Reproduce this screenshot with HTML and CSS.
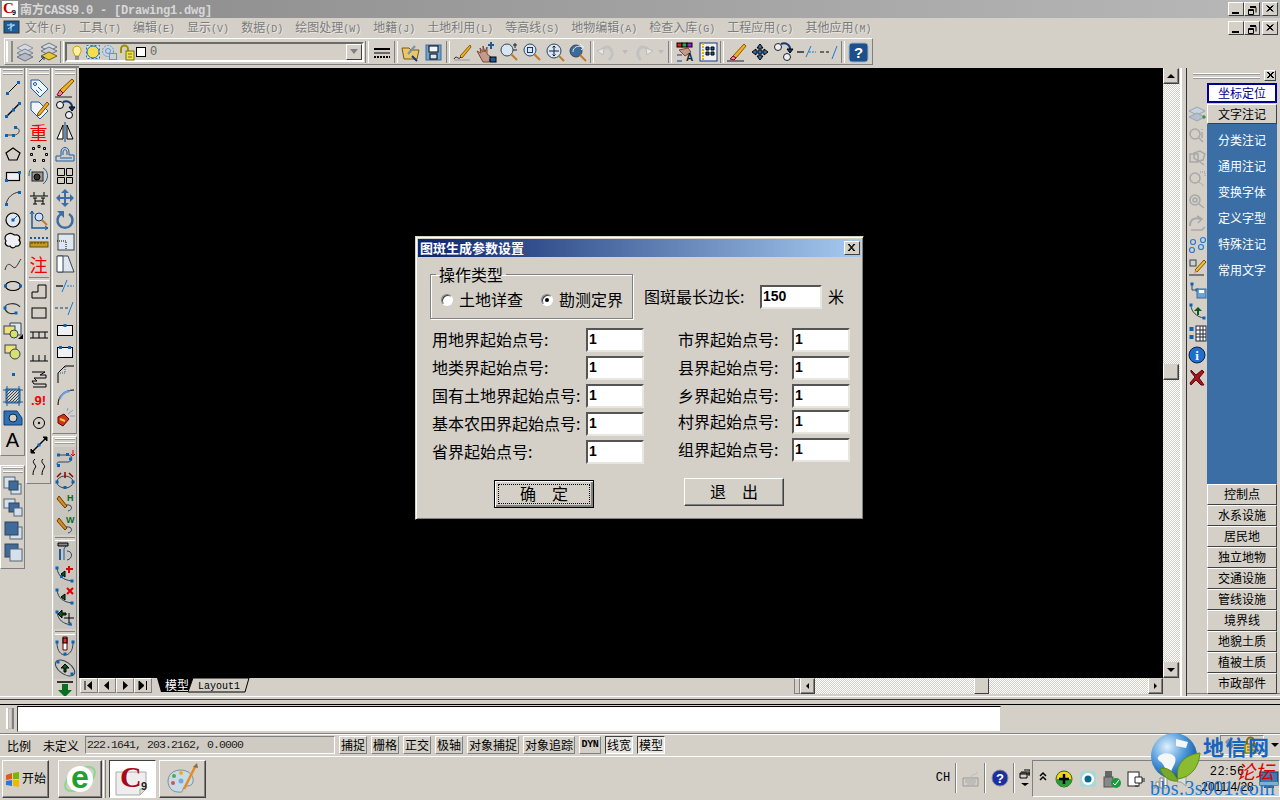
FILE: index.html
```html
<!DOCTYPE html>
<html lang="zh-CN">
<head>
<meta charset="utf-8">
<title>南方CASS9.0</title>
<link rel="stylesheet" href="styles.css">
</head>
<body>
<div class="app">

<header class="titlebar">
  <svg class="appicon"><rect width="16" height="16" fill="#fff"/><text x="1" y="12" class="cred">C</text><text x="10" y="14" class="c9">9</text></svg>
  <div class="title">南方<span class="mono">CASS9.0 - [Drawing1.dwg]</span></div>
  <div class="caps">
    <span class="cap"><svg class="capi"><rect x="3" y="9" width="7" height="2" fill="#000"/></svg></span>
    <span class="cap"><svg class="capi"><path d="M5 4.500h6v5M5 3.500h6M3.500 6.500h5v5h-5zM3.500 7.500h5" stroke="#000" fill="none"/></svg></span>
    <span class="cap capgap"><svg class="capi"><path d="M3.500 2.500l6 6M4.500 2.500l6 6M9.500 2.500l-6 6M10.500 2.500l-6 6" stroke="#000"/></svg></span>
  </div>
</header>

<nav class="menubar">
  <svg class="menuicon"><rect x="1" y="2" width="15" height="12" fill="#1c5c9a" stroke="#333"/><path d="M8 4v8M4 6h8M5 10l6-4" stroke="#bfe6ff"/></svg>
  <div class="menus">
    <span class="mi">文件<i>(F)</i></span><span class="mi">工具<i>(T)</i></span><span class="mi">编辑<i>(E)</i></span><span class="mi">显示<i>(V)</i></span><span class="mi">数据<i>(D)</i></span><span class="mi">绘图处理<i>(W)</i></span><span class="mi">地籍<i>(J)</i></span><span class="mi">土地利用<i>(L)</i></span><span class="mi">等高线<i>(S)</i></span><span class="mi">地物编辑<i>(A)</i></span><span class="mi">检查入库<i>(G)</i></span><span class="mi">工程应用<i>(C)</i></span><span class="mi">其他应用<i>(M)</i></span>
  </div>
  <div class="caps caps2">
    <span class="cap"><svg class="capi"><rect x="3" y="9" width="7" height="2" fill="#000"/></svg></span>
    <span class="cap"><svg class="capi"><path d="M5 4.500h6v5M5 3.500h6M3.500 6.500h5v5h-5zM3.500 7.500h5" stroke="#000" fill="none"/></svg></span>
    <span class="cap capgap"><svg class="capi"><path d="M3.500 2.500l6 6M4.500 2.500l6 6M9.500 2.500l-6 6M10.500 2.500l-6 6" stroke="#000"/></svg></span>
  </div>
</nav>

<div class="toolband">
  <div class="toolbar">
    <span class="tgrip"></span>
    <span class="ti"><svg class="i"><path d="M11 3l8 4-8 4-8-4z" fill="#d6dbe2" stroke="#8a929e"/><path d="M11 8l8 4-8 4-8-4z" fill="#c6ccd6" stroke="#7a828e"/><path d="M11 12l8 4-8 4-8-4z" fill="#b4bac6" stroke="#6a7280"/></svg></span>
    <span class="ti"><svg class="i"><path d="M12 2l8 4-8 4-8-4z" fill="#d6dbe2" stroke="#6a7280"/><path d="M12 6l8 4-8 4-8-4z" fill="#c6ccd6" stroke="#6a7280"/><path d="M12 11l8 4-8 4-8-4z" fill="#e8c830" stroke="#6a6020"/><path d="M2 21l5-5M4 16h3v3" stroke="#123a78"/></svg></span>
    <span class="tsep"></span>
    <div class="combo">
      <svg class="lyr"><path d="M8 4a4.500 4.500 0 0 1 3 7.500L10 14H6l-1-2.500A4.500 4.500 0 0 1 8 4z" fill="#ffefa0" stroke="#c8a000"/><path d="M6 15h4M6 17h4" stroke="#556"/></svg>
      <svg class="lyr"><rect x="1.500" y="3.500" width="13" height="13" fill="#cfe0f0" stroke-dasharray="2 2" stroke="#2a6cb0"/><circle cx="8" cy="10" r="6" fill="#f5dd50" stroke="#26709a"/></svg>
      <svg class="lyr"><circle cx="7" cy="9" r="5.500" fill="#c7d4e2" stroke="#6a94bc" stroke-dasharray="2 1"/><circle cx="7" cy="9" r="2.500" fill="none" stroke="#6a94bc"/><rect x="8.500" y="11.500" width="7" height="6" fill="#d4d0c8" stroke="#6a94bc"/></svg>
      <svg class="lyr lk"><path d="M3 11V7a3.500 3.500 0 0 1 7 0v2" fill="none" stroke="#a09000" stroke-width="2"/><rect x="8" y="9" width="8" height="9" fill="#efe04a" stroke="#7a7010"/><path d="M10 12h4M10 15h4" stroke="#7a7010"/></svg>
      <span class="colorbox"></span>
      <span class="lname">0</span>
      <span class="dropbtn"><span class="tri-d"></span></span>
    </div>
    <span class="tsep"></span>
    <span class="ti"><svg class="i"><path d="M3 8h16" stroke="#000" stroke-width="2"/><path d="M3 12h16" stroke="#000" stroke-width="1"/><path d="M3 16h16" stroke="#000" stroke-width="2" stroke-dasharray="2 1"/></svg></span>
    <span class="tsep"></span>
    <span class="ti"><svg class="i"><path d="M2 7h7l2 2h8l-2 9H4z" fill="#e8c66a" stroke="#7a5a10"/><path d="M8 13l7-8" stroke="#7a90aa" stroke-width="2"/><path d="M12 15l5 5" stroke="#123a78" stroke-width="2"/></svg></span>
    <span class="ti"><svg class="i"><rect x="3" y="4" width="15" height="15" fill="#6fa3cf" stroke="#3b6a9c"/><rect x="6" y="5" width="9" height="6" fill="#f2f6fa"/><rect x="7" y="13" width="7" height="5" fill="#dde4ec"/></svg></span>
    <span class="tsep"></span>
    <span class="ti"><svg class="i"><path d="M8 15L18 4l1 2L10 17z" fill="#f0b020" stroke="#8a5a00"/><path d="M2 18c3-5 4 2 7-2" stroke="#222" fill="none"/><path d="M2 19h16" stroke="#999"/></svg></span>
    <span class="ti"><svg class="i"><path d="M2 10l4 2-1-5 3 4 0-6 2 6 2-5 0 7 4 3-2 5H8z" fill="#c49a8a" stroke="#7a4a3a"/><path d="M16 1v7M13 4h6" stroke="#1c5c9a" stroke-width="2"/><rect x="15" y="16" width="6" height="5" fill="#1c5c9a"/></svg></span>
    <span class="ti"><svg class="i"><circle cx="9" cy="9" r="6" fill="#d8e6f4" stroke="#345"/><path d="M13 13l6 6" stroke="#c07a28" stroke-width="2"/><path d="M17 2v5M15 4h4M15 9h4" stroke="#123"/></svg></span>
    <span class="ti"><svg class="i"><circle cx="9" cy="9" r="6" fill="#d8e6f4" stroke="#345"/><rect x="6.500" y="6.500" width="5" height="5" stroke="#123a78" fill="none"/><path d="M13 13l6 6" stroke="#c07a28" stroke-width="2"/></svg></span>
    <span class="ti"><svg class="i"><circle cx="10" cy="10" r="7" fill="#d8e6f4" stroke="#345"/><path d="M10 5v10M5 10h10M8.500 6.500L10 5l1.500 1.500M8.500 13.500L10 15l1.500-1.500" stroke="#123" fill="none"/><path d="M15 15l5 5" stroke="#c07a28" stroke-width="2"/></svg></span>
    <span class="ti"><svg class="i"><circle cx="9" cy="10" r="6" fill="#3c6a9a" stroke="#345"/><path d="M6 11c0-5 5-7 10-5M13 3l4 3-3 3" stroke="#dfe9f3" fill="none"/><path d="M13 14l6 6" stroke="#c07a28" stroke-width="2"/></svg></span>
    <span class="tsep"></span>
    <span class="ti"><svg class="i"><path d="M5 11c2-6 9-7 11 0 1 3-1 6-3 8" fill="none" stroke="#c2c2c2" stroke-width="3"/><path d="M1 10l7-3-1 7z" fill="#e6e6e6" stroke="#bbb"/></svg></span>
    <span class="tv"><span class="tri-s"></span></span>
    <span class="ti"><svg class="i"><path d="M17 11c-2-6-9-7-11 0-1 3 1 6 3 8" fill="none" stroke="#c2c2c2" stroke-width="3"/><path d="M21 10l-7-3 1 7z" fill="#e6e6e6" stroke="#bbb"/></svg></span>
    <span class="tv"><span class="tri-s"></span></span>
    <span class="tsep"></span>
    <span class="ti"><svg class="i"><rect x="3" y="2" width="5" height="4" fill="#e02020"/><rect x="8" y="2" width="5" height="4" fill="#20b040"/><rect x="13" y="2" width="5" height="4" fill="#a020d0"/><path d="M5 9l9-2 3 4-6 4z" fill="#c49a8a" stroke="#7a4a3a"/><path d="M3 14h5M3 20h5" stroke="#123a78"/><text x="12" y="20" class="ta">A</text></svg></span>
    <span class="ti"><svg class="i"><rect x="3" y="2" width="17" height="18" fill="#eef0f4" stroke="#123a78"/><path d="M6 2v18" stroke="#e0b000" stroke-dasharray="2 1" stroke-width="2"/><path d="M9 6h3v3H9zM14 6h3v3h-3zM9 11h3v3H9zM14 11h3v3h-3z" fill="#1c5c9a"/></svg></span>
    <span class="tsep"></span>
    <span class="ti"><svg class="i"><path d="M7 15L18 3l2 2L10 17z" fill="#f0b020" stroke="#8a5a00"/><path d="M7 15l3 2-2 2-4-1z" fill="#e58a90" stroke="#803"/><path d="M1 20h17" stroke="#222"/></svg></span>
    <span class="ti"><svg class="i"><path d="M11 3l3 4h-2v3h3V8l4 3-4 3v-2h-3v3h2l-3 4-3-4h2v-3H7v2l-4-3 4-3v2h3V7H8z" fill="#3a6ea5"/></svg></span>
    <span class="ti"><svg class="i"><circle cx="6" cy="6" r="3.500" fill="#eaf0f6" stroke="#222"/><circle cx="15" cy="16" r="3.500" fill="#eaf0f6" stroke="#222"/><path d="M9 3c5-2 9 1 9 5" fill="none" stroke="#123a78" stroke-width="2"/><path d="M15 8h6l-3 4z" fill="#123a78"/></svg></span>
    <span class="ti"><svg class="i"><path d="M2 11h7" stroke="#000" stroke-width="1.200"/><path d="M11 16l5-11" stroke="#1c7ad0"/><path d="M14 11h7" stroke="#1c7ad0" stroke-dasharray="2 1"/></svg></span>
    <span class="ti"><svg class="i"><path d="M2 11h4M8 11h3" stroke="#000" stroke-width="1.200"/><path d="M14 18l5-13" stroke="#1c7ad0"/></svg></span>
    <span class="tsep"></span>
    <span class="ti"><svg class="i"><rect x="2" y="2" width="19" height="19" rx="3" fill="#1c4f8c" stroke="#9db3cc"/><text x="11.500" y="17" class="tq">?</text></svg></span>
  </div>
</div>

<main class="mainrow">
  <aside class="docks">
    <div class="dcol dcol1">
      <section class="dsec s1a">
        <div class="grip"></div>
        <span class="ic"><svg class="i"><path d="M6 16L16 6"/><path class="n" d="M4 15h3v3H4zM15 4h3v3h-3z"/></svg></span>
        <span class="ic"><svg class="i"><path d="M5 17L17 5" stroke-width="1.500"/><path class="n" d="M3 16h3v3H3zM10 9.500h3v3h-3zM16 3h3v3h-3z"/></svg></span>
        <span class="ic"><svg class="i"><path d="M5 14h7c6 0 7-7 2-7" stroke="#444"/><path class="n" d="M3 13h3v3H3zM10 13h3v3h-3zM12 5h3v3h-3z"/></svg></span>
        <span class="ic"><svg class="i"><path d="M11 5l7 5-3 7H7l-3-7z" stroke-width="1.200"/></svg></span>
        <span class="ic"><svg class="i"><rect x="4.500" y="7.500" width="13" height="8" fill="#eef0f4" stroke-width="1.200"/><path class="n" d="M3 14h3v3H3zM16 6h3v3h-3z"/></svg></span>
        <span class="ic"><svg class="i"><path d="M4 18C5 10 11 6 17 5" stroke="#333"/><path class="n" d="M3 16h3v3H3zM16 4h3v3h-3z"/></svg></span>
        <span class="ic"><svg class="i"><circle cx="11" cy="11" r="7" fill="#e4e8ee" stroke-width="1.200"/><path d="M11 11l4-4" stroke="#1c5c9a"/><path class="n" d="M9.500 9.500h3v3h-3z"/></svg></span>
        <span class="ic"><svg class="i"><path d="M6 3c4-2 5 1 7 1 4-1 6 3 4 5 3 3 0 7-3 6-2 3-5 2-6 0-3 1-6-2-4-5-2-2-1-6 2-7z" fill="#eef0f4" stroke-width="1.200"/></svg></span>
        <span class="ic"><svg class="i"><path d="M3 17c2-8 5-6 8-3s5-4 8-8" stroke="#333"/></svg></span>
        <span class="ic"><svg class="i"><ellipse cx="11" cy="11" rx="7.500" ry="4.500" stroke-width="1.200"/><path class="n" d="M2 9.500h3v3H2zM17 9.500h3v3h-3z"/></svg></span>
        <span class="ic"><svg class="i"><path d="M14 16c-6 2-11-1-11-5 0-5 11-6 15-1" stroke="#333" stroke-width="1.200"/><path class="n" d="M1.500 9.500h3v3h-3zM12.500 14.500h3v3h-3z"/></svg></span>
        <span class="ic"><svg class="i"><path d="M8 4h11v12H8z" fill="#dfe6ee" stroke="#345"/><rect x="2" y="7" width="11" height="8" fill="#f0e078" stroke="#345"/><circle cx="12" cy="15" r="4" fill="#d8e070" stroke="#345"/><path d="M16 20l5-5v5z" fill="#000" stroke="none"/></svg></span>
        <span class="ic"><svg class="i"><rect x="3" y="4" width="11" height="8" fill="#f0e078" stroke="#345"/><circle cx="13" cy="13" r="5" fill="#d8e070" stroke="#345"/></svg></span>
        <span class="ic"><svg class="i"><path class="n" d="M10 10h3v3h-3z"/></svg></span>
        <span class="ic"><svg class="i"><rect x="4" y="4" width="14" height="14" fill="url(#h)" stroke="#1c5c9a"/><path d="M1 5h20M1 17h20M5 1v20M17 1v20" stroke="#1c5c9a"/><defs><pattern id="h" width="3" height="3" patternUnits="userSpaceOnUse"><path d="M0 3l3-3" stroke="#345"/></pattern></defs></svg></span>
        <span class="ic"><svg class="i"><path d="M2 4h13l5 7v7H2z" fill="#2c72b4" stroke="#123a78"/><circle cx="11" cy="11" r="4" fill="#d4d0c8" stroke="#123"/></svg></span>
        <span class="ic"><span class="biga">A</span></span>
      </section>
      <section class="dsec s1b">
        <div class="grip"></div>
        <span class="ic"><svg class="i"><rect x="2" y="2" width="11" height="11" fill="#d5e0ec" stroke="#567"/><rect x="9" y="9" width="10" height="10" fill="#d5e0ec" stroke="#567"/><rect x="7" y="6" width="9" height="9" fill="#3f6a9c" stroke="#345"/></svg></span>
        <span class="ic"><svg class="i"><rect x="2" y="2" width="11" height="9" fill="#d5e0ec" stroke="#567"/><rect x="7" y="6" width="10" height="9" fill="#3f6a9c" stroke="#345"/><rect x="12" y="11" width="8" height="8" fill="#d5e0ec" stroke="#567"/></svg></span>
        <span class="ic"><svg class="i"><rect x="8" y="8" width="12" height="12" fill="#d5e0ec" stroke="#567"/><rect x="3" y="3" width="13" height="13" fill="#3f6a9c" stroke="#345"/></svg></span>
        <span class="ic"><svg class="i"><rect x="3" y="3" width="13" height="13" fill="#3f6a9c" stroke="#345"/><rect x="8" y="8" width="12" height="12" fill="#d5e0ec" stroke="#567"/></svg></span>
      </section>
    </div>

    <div class="dcol dcol2">
      <section class="dsec s2">
        <div class="grip"></div>
        <span class="ic"><svg class="i"><path d="M3 3h8l9 9-8 8-9-9z" fill="#eef4fa" stroke="#1c5c9a"/><circle cx="7" cy="7" r="1.500" stroke="#1c5c9a"/><path d="M10 10l4 4M8 13l3 3" stroke="#1c5c9a"/></svg></span>
        <span class="ic"><svg class="i"><path d="M3 3h8l9 9-8 8-9-9z" fill="#eef4fa" stroke="#1c5c9a"/><path d="M10 14l9-11 2 2-9 11-3 1z" fill="#f0b020" stroke="#7a4a00"/></svg></span>
        <span class="ic"><span class="redz">重</span></span>
        <span class="ic"><svg class="i" stroke-width="1"><path d="M4.500 4.500h2v2h-2zM15.500 4.500h2v2h-2zM2.500 10.500h2v2h-2zM17.500 10.500h2v2h-2zM5.500 16.500h2v2h-2zM14.500 16.500h2v2h-2zM10 2.500h2v2h-2z"/></svg></span>
        <span class="ic"><svg class="i"><rect x="4" y="7" width="11" height="9" fill="#999" stroke="#222"/><circle cx="9" cy="12" r="3" fill="#333"/><path d="M15 3c6 3 6 12 0 16" stroke="#1c5c9a"/><path d="M3 4c-2 2-2 5-2 7" stroke="#1c5c9a"/></svg></span>
        <span class="ic"><svg class="i"><path d="M2 9h18M6 5v4M16 5v4M7 11v6M15 11v6M7 14h8M5 17h4M13 17h4M5 11h4M13 11h4" stroke-width="1"/></svg></span>
        <span class="ic"><svg class="i"><path d="M4 2v17h16" stroke="#1c5c9a" stroke-width="1.500"/><path d="M2 5l2-3 2 3M17 17l3 2-3 2" stroke="#1c5c9a"/><circle cx="11" cy="8" r="4" fill="#cfe0f0" stroke="#123a78"/><path d="M14 11l5 5" stroke="#c07a28" stroke-width="2"/></svg></span>
        <span class="ic"><svg class="i"><path d="M2 7h18" stroke="#1c5c9a" stroke-dasharray="2 2" stroke-width="2"/><rect x="2" y="11" width="18" height="5" fill="#c69a22" stroke="#6a5000"/><path d="M4 11v2M7 11v2M10 11v2M13 11v2M16 11v2" stroke="#5a4000"/></svg></span>
        <span class="ic"><span class="redz">注</span></span>
        <div class="dsep"></div>
        <span class="ic"><svg class="i"><path d="M4 18v-6h6V5h8v13z" stroke-width="1"/></svg></span>
        <span class="ic"><svg class="i"><rect x="4" y="6" width="14" height="10" stroke-width="1"/></svg></span>
        <span class="ic"><svg class="i"><path d="M2 8h18M2 14h18M5 8v6M11 8v6M17 8v6" stroke-width="1"/></svg></span>
        <span class="ic"><svg class="i"><path d="M2 15h18M5 9v6M11 9v6M17 9v6" stroke-width="1"/></svg></span>
        <span class="ic"><svg class="i"><path d="M4 4h13l-5 3h6v3H6l3 3H4l2 3h12v3H5" stroke-width="1"/></svg></span>
        <span class="ic"><span class="red9">.9!</span></span>
        <span class="ic"><svg class="i"><circle cx="11" cy="11" r="5.500" stroke-width="1"/><circle cx="11" cy="11" r=".8" fill="#000"/></svg></span>
        <span class="ic"><svg class="i"><path d="M4 18L18 4" stroke-width="1.500"/><path d="M15 3h4v4z" fill="#000"/><path d="M3 15v4h4z" fill="#000"/><path class="n" d="M9.500 9.500h3v3h-3z"/></svg></span>
        <span class="ic"><svg class="i"><path d="M7 3c-5 4 3 6 0 9-1 2-2 3-2 7M15 3c-4 4 4 6 1 9-1 2-2 3-2 7" stroke-width="1"/></svg></span>
      </section>
    </div>

    <div class="dcol dcol3">
      <section class="dsec s3a">
        <div class="grip"></div>
        <span class="ic"><svg class="i"><path d="M6 13L18 2l2 2L9 16z" fill="#f0b020" stroke="#7a4a00"/><path d="M6 13l3 3-3 3-3-1z" fill="#e58a90" stroke="#803"/><path d="M1 20h17" stroke="#222"/></svg></span>
        <span class="ic"><svg class="i" stroke-width="1"><circle cx="6" cy="6" r="3.500" fill="#eaf0f6"/><circle cx="15" cy="16" r="3.500" fill="#eaf0f6"/><path d="M9 3c5-2 9 1 9 5" stroke="#123a78" stroke-width="2"/><path d="M15 8h6l-3 4z" fill="#123a78"/></svg></span>
        <span class="ic"><svg class="i" stroke-width="1"><path d="M3 18L9 4v14z" fill="#fff"/><path d="M19 18L13 4v14z" fill="#e4e4e4"/><path d="M11 1v20" stroke="#1c5c9a" stroke-width="1.200"/></svg></span>
        <span class="ic"><svg class="i"><path d="M2 18v-5h5V9c0-6 8-6 8 0v3h5v6z" stroke="#1c5c9a" stroke-width="1"/><path d="M6 15h12M9 12V9c0-3 4-3 4 0v3" stroke="#1c5c9a"/></svg></span>
        <span class="ic"><svg class="i" stroke-width="1.200"><path d="M3.500 3.500h7v7h-7zM12.500 3.500h6v7h-6zM3.500 12.500h7v6h-7zM12.500 12.500h6v6h-6z"/></svg></span>
        <span class="ic"><svg class="i"><path d="M11 2l4 4h-3v4h4V7l4 4-4 4v-3h-4v4h3l-4 4-4-4h3v-4H6v3l-4-4 4-4v3h4V6H7z" fill="#3a6ea5" stroke="none"/></svg></span>
        <span class="ic"><svg class="i"><path d="M15 5a7.500 7.500 0 1 1-8 0" stroke="#3a6ea5" stroke-width="2.500"/><path d="M3 2h7v7z" fill="#3a6ea5" stroke="none"/></svg></span>
        <span class="ic"><svg class="i"><rect x="4" y="3" width="16" height="16" fill="#dfe6ee" stroke="#345"/><path d="M3 10h9v9" stroke="#000" stroke-dasharray="1 1"/></svg></span>
        <span class="ic"><svg class="i"><path d="M4 3h10l6 16H4z" fill="#dfe6ee" stroke="#345"/><path d="M3 3h6v16H3z" fill="#fff" stroke="#345"/></svg></span>
        <span class="ic"><svg class="i"><path d="M2 11h7" stroke-width="1.200"/><path d="M8 17l5-12" stroke="#1c7ad0"/><path d="M13 11h7" stroke="#1c7ad0" stroke-dasharray="2 1"/></svg></span>
        <span class="ic"><svg class="i"><path d="M1 11h3M6 11h3M11 11h3" stroke="#123a78"/><path d="M14 18l5-13" stroke="#1c7ad0"/></svg></span>
        <span class="ic"><svg class="i"><rect x="3.500" y="6.500" width="15" height="10" fill="#eef0f4" stroke-width="1"/><path class="n" d="M9.500 5h3v3h-3z"/></svg></span>
        <span class="ic"><svg class="i"><rect x="3.500" y="6.500" width="15" height="10" fill="#eef0f4" stroke-width="1"/><path class="n" d="M5 5h3v3H5zM14 5h3v3h-3z"/></svg></span>
        <span class="ic"><svg class="i"><path d="M4 20V10l7-7h9" stroke-width="1"/><path d="M4 10h7V3" stroke="#1c5c9a" stroke-dasharray="1 1"/></svg></span>
        <span class="ic"><svg class="i"><path d="M4 20c0-9 6-15 16-15" stroke-width="1"/><path d="M6 14c1-4 4-7 10-8" stroke="#6aa0dc" stroke-width="2"/></svg></span>
        <span class="ic"><svg class="i"><path d="M4 10l6-3 5 5-6 7-5-3z" fill="#d23020" stroke="#601"/><path d="M6 12l5 2" stroke="#f0d020" stroke-width="2"/><path d="M14 7l5-4M13 4l1-3M16 9l5 0" stroke="#7aa0d0"/></svg></span>
      </section>
      <section class="dsec s3b">
        <div class="grip g2"></div>
        <span class="ic"><svg class="i gbg"><path d="M4 8h10c5 0 5 7 0 7H5c-3 0-2 4 0 5" stroke="#345"/><path class="n" d="M3 6.500h3v3H3zM12 6h3v3h-3zM15 10.500h3v3h-3zM3 17h3v3H3z"/><path d="M19 3v6M17 7l2 2 2-2" stroke="#e00000"/></svg></span>
        <span class="ic"><svg class="i gbg"><ellipse cx="11" cy="13" rx="8" ry="6" stroke="#345"/><path class="n" d="M1.500 11.500h3v3h-3zM17.500 11.500h3v3h-3zM9.500 17h3v3h-3z"/><path d="M3 8l4-4M19 8l-4-4M11 3v6" stroke="#900000" stroke-width="1.500"/></svg></span>
        <span class="ic"><svg class="i gbg"><path d="M3 3l8 10-2 2-8-9z" fill="#d88a20" stroke="#6a4000" transform="translate(2 2)"/><path d="M12 14c7-1 7 5 2 6" stroke="#345"/><text x="13" y="10" class="gh">H</text></svg></span>
        <span class="ic"><svg class="i gbg"><path d="M3 3l8 10-2 2-8-9z" fill="#d88a20" stroke="#6a4000" transform="translate(2 2)"/><path d="M12 14c7-1 7 5 2 6" stroke="#345"/><text x="12" y="10" class="gh">W</text></svg></span>
        <div class="dsep ds3"></div>
        <span class="ic"><svg class="i gbg"><path d="M6 3h7l-3 5v11" stroke="#1c5c9a"/><path d="M6 8v11" stroke="#1c5c9a" stroke-width="2"/><path d="M13 10c6 0 6 8 0 9" stroke="#345"/><path d="M4 2h10v3H4z" fill="#888"/></svg></span>
        <span class="ic"><svg class="i gbg"><path d="M3 5c1 8 6 12 15 13" stroke="#345"/><path class="n" d="M1.500 3.500h3v3h-3zM16.500 16.500h3v3h-3zM6 12h3v3H6z"/><path d="M15 3v7M12 6h7" stroke="#e00000" stroke-width="2"/><path d="M7 11l4-3v6z" fill="#0a5a20"/></svg></span>
        <span class="ic"><svg class="i gbg"><path d="M3 5c1 8 6 12 15 13" stroke="#345"/><path class="n" d="M1.500 3.500h3v3h-3zM16.500 16.500h3v3h-3z"/><path d="M13 3l6 6M19 3l-6 6" stroke="#e00000" stroke-width="2"/><path d="M7 12l4-3v6z" fill="#0a5a20"/></svg></span>
        <span class="ic"><svg class="i gbg"><path d="M3 5c1 8 6 12 15 13" stroke="#345"/><path class="n" d="M1.500 3.500h3v3h-3zM14.500 15.500h3v3h-3z"/><path d="M4 7l4-4v3h4v2H8v3z" fill="#0a5a20"/><path d="M15 6v10M10 11h10" stroke="#000"/></svg></span>
        <div class="dsep ds3"></div>
        <span class="ic"><svg class="i gbg"><path d="M3 8c0 8 4 12 8 12s8-4 8-12" stroke="#345"/><path d="M9 2h4v13H9z" fill="#fff" stroke="#600"/><rect x="9" y="3" width="4" height="5" fill="#e03030"/><path class="n" d="M1.500 5.500h3v3h-3zM17.500 5.500h3v3h-3zM9.500 17.500h3v3h-3z"/></svg></span>
        <span class="ic"><svg class="i gbg"><ellipse cx="11" cy="11" rx="11" ry="6" transform="rotate(35 11 11)" stroke="#345"/><path class="n" d="M2.500 3.500h3v3h-3zM16.500 15.500h3v3h-3z"/><path d="M11 7l4 4h-3v4h-2v-4H7z" fill="#0a5a20"/></svg></span>
        <span class="ic"><svg class="i"><path d="M3 3h16" stroke-width="1.500"/><path d="M8 5h6v6h4l-7 7-7-7h4z" fill="#0a7020" stroke="none"/></svg></span>
      </section>
    </div>
  </aside>

  <div class="center">
    <div class="cvrow">
      <div class="canvas"></div>
      <div class="vscroll">
        <span class="sbtn"><span class="tri-u"></span></span>
        <div class="vtrack"><span class="vthumb"></span></div>
        <span class="sbtn"><span class="tri-d2"></span></span>
      </div>
    </div>
    <div class="hrow">
      <div class="navbtns">
        <span class="nb"><svg class="ni"><path d="M4 2v9" stroke="#000"/><path d="M11 2L6 6.500 11 11z" fill="#000"/></svg></span>
        <span class="nb"><svg class="ni"><path d="M10 2L5 6.500 10 11z" fill="#000"/></svg></span>
        <span class="nb"><svg class="ni"><path d="M6 2l5 4.500L6 11z" fill="#000"/></svg></span>
        <span class="nb"><svg class="ni"><path d="M4 2l5 4.500L4 11zM11.500 2v9" fill="#000" stroke="#000"/></svg></span>
      </div>
      <svg class="tabs"><path d="M0 0L4 14H31L36 0z" fill="#000"/><text x="8" y="12" class="tabt">模型</text><path d="M36 0l-5 14H88L92 0z" fill="#d4d0c8" stroke="#000"/><text x="41" y="11" class="tabl">Layout1</text></svg>
      <span class="hspace"></span>
      <span class="hgrip"></span>
      <span class="sbtn hbtn"><span class="tri-l"></span></span>
      <div class="htrack"><span class="hthumb"></span></div>
      <span class="sbtn hbtn"><span class="tri-r"></span></span>
    </div>
  </div>

  <div class="band"></div>

  <aside class="rpanel">
    <div class="rhead"><span class="rgrip"></span><span class="rclose"><svg class="rx"><path d="M2 1l6 6M3 1l6 6M8 1L2 7M9 1L3 7" stroke="#000"/></svg></span></div>
    <div class="rbody">
      <div class="ricons">
        <span class="ric"><svg class="j"><path d="M9 3l8 4-8 4-8-4z" fill="#c6d2de" stroke="#98a4b0"/><path d="M9 9l8 4-8 4-8-4z" fill="#b4c0cc" stroke="#98a4b0"/><path d="M14 13h4M16 11v4" stroke="#1a8a2a"/></svg></span>
        <span class="ric"><svg class="j gr"><circle cx="7" cy="8" r="5"/><path d="M11 12l4 4M14 3v1M14 6v6"/></svg></span>
        <span class="ric"><svg class="j gr"><path d="M6 5l6-2 5 3-2 6-5 1-4-3z"/><path d="M2 6h8v8H2zM11 13l5 4"/></svg></span>
        <span class="ric"><svg class="j gr"><circle cx="7" cy="8" r="5"/><path d="M11 12l5 4M12 2h5v5" stroke-dasharray="1 1"/></svg></span>
        <span class="ric"><svg class="j gr"><circle cx="7" cy="8" r="5"/><circle cx="7" cy="8" r="2"/><path d="M11 12l5 4"/></svg></span>
        <span class="ric"><svg class="j gr"><path d="M2 12c0-7 5-9 11-7" stroke-width="2"/><path d="M9 2l5 3-4 4M3 16h11l3-3"/></svg></span>
        <span class="ric"><svg class="j blu"><circle cx="4" cy="14" r="2.500"/><circle cx="13" cy="11" r="2.500"/><circle cx="5" cy="6" r="2.500"/><circle cx="15" cy="4" r="2.500"/></svg></span>
        <span class="ric"><svg class="j"><rect x="2" y="2" width="6" height="6" fill="none" stroke="#345"/><path d="M7 12L16 2l2 2-9 10z" fill="#f0c030" stroke="#7a5000"/><path d="M7 12l2 2-3 2z" fill="#e58a90"/><path d="M1 17h15" stroke="#222"/></svg></span>
        <span class="ric"><svg class="j"><path d="M4 4v6h5" stroke="#345" fill="none"/><path class="n" d="M2.500 2.500h3v3h-3zM7.500 8.500h3v3h-3z"/><rect x="9" y="9" width="9" height="9" fill="#6fa3cf" stroke="#3b6a9c"/><rect x="11" y="10" width="5" height="3" fill="#fff"/></svg></span>
        <span class="ric"><svg class="j"><path d="M3 3c0 7 6 12 13 13" fill="none" stroke="#345"/><path class="n" d="M1.500 1.500h3v3h-3zM14.500 14.500h3v3h-3z"/><path d="M10 5l4 4h-3v4H9V9H6z" fill="#0a5a20"/></svg></span>
        <span class="ric"><svg class="j"><rect x="8" y="2" width="10" height="15" fill="#fff" stroke="#223"/><path d="M8 6h10M8 10h10M8 13h10M12 2v15M15 2v15" stroke="#223"/><path class="n" d="M1.500 3h4v4h-4zM1.500 11h4v4h-4z"/></svg></span>
        <span class="ric"><svg class="j"><circle cx="9" cy="9" r="8" fill="#1f6fd0" stroke="#123"/><text x="9" y="14" class="ri">i</text></svg></span>
        <span class="ric"><svg class="j"><path d="M3 2l5 5 6-5 2 2-5 6 5 7h-3l-5-5-5 5-1-2 5-6-4-5z" fill="#a01818" stroke="#601"/></svg></span>
      </div>
      <div class="rbtns">
        <span class="rb sel">坐标定位</span>
        <span class="rb r2">文字注记</span>
        <div class="rlist">
          <span class="rli">分类注记</span>
          <span class="rli">通用注记</span>
          <span class="rli">变换字体</span>
          <span class="rli">定义字型</span>
          <span class="rli">特殊注记</span>
          <span class="rli">常用文字</span>
        </div>
        <span class="rb rs">控制点</span>
        <span class="rb rs">水系设施</span>
        <span class="rb rs">居民地</span>
        <span class="rb rs">独立地物</span>
        <span class="rb rs">交通设施</span>
        <span class="rb rs">管线设施</span>
        <span class="rb rs">境界线</span>
        <span class="rb rs">地貌土质</span>
        <span class="rb rs">植被土质</span>
        <span class="rb rs">市政部件</span>
      </div>
    </div>
  </aside>
</main>

<section class="cmd">
  <span class="cgrip"></span>
  <input class="cinput" type="text" aria-label="命令行">
</section>

<footer class="status">
  <span class="slabel sl1">比例</span>
  <span class="slabel sl2">未定义</span>
  <span class="coord">222.1641, 203.2162, 0.0000</span>
  <div class="sbtns">
    <span class="sb w28">捕捉</span><span class="sb w28">栅格</span><span class="sb w28">正交</span><span class="sb w28">极轴</span><span class="sb w52">对象捕捉</span><span class="sb w52">对象追踪</span><span class="sb w22 dyn">DYN</span><span class="sb w28 on">线宽</span><span class="sb w28 on">模型</span>
  </div>
  <span class="slock"><svg class="lockg"><path d="M8 2l5 8-3 3-6-7z" fill="#8a8f9a"/><path d="M26 8V5a3 3 0 0 1 7 0v3" fill="none" stroke="#8a7000" stroke-width="2"/><rect x="24" y="8" width="11" height="9" fill="#e8d040" stroke="#6a5a00"/><path d="M26 11h7M26 14h7" stroke="#6a5a00"/></svg></span>
  <span class="sdrop"></span>
</footer>

<div class="taskbar">
  <span class="tb start"><svg class="flag"><path d="M1 4l6-2v6l-6 1z" fill="#e25a20"/><path d="M8 2l6-1v7l-6 0z" fill="#7ab800"/><path d="M1 10l6-1v6l-6-1z" fill="#2a78d8"/><path d="M8 9h6v7l-6-1z" fill="#f0b800"/></svg><span class="stxt">开始</span></span>
  <span class="tb ie"><svg class="big"><ellipse cx="18" cy="18" rx="17" ry="9" transform="rotate(-35 18 18)" fill="none" stroke="#8ad890" stroke-width="2"/><circle cx="18" cy="18" r="13" fill="#fff"/><text x="18" y="27" class="iet">e</text></svg></span>
  <span class="tbgrip"></span>
  <span class="tb c9btn"><svg class="big"><path d="M1 11h30v17l-6 6H1z" fill="#eee" stroke="#aaa"/><path d="M25 34v-6h6z" fill="#ddd" stroke="#aaa"/><text x="5" y="26" class="c9a">C</text><text x="26" y="29" class="c9b">9</text></svg></span>
  <span class="tb pal"><svg class="big"><path d="M3 20c0-9 10-13 18-10 6 2 9 8 6 13-2 3-6 1-8 3-2 3 0 6-6 5-6 0-10-5-10-11z" fill="#c8dce8" stroke="#7a8ea0"/><circle cx="9" cy="15" r="2" fill="#58a848"/><circle cx="16" cy="12" r="2" fill="#e8b020"/><circle cx="8" cy="22" r="2" fill="#d85050"/><circle cx="16" cy="20" r="2.500" fill="#7aa8d8"/><path d="M19 28L30 6" stroke="#e88a20" stroke-width="2.500"/><path d="M28 6l4-4 1 5z" fill="#8a6a40"/></svg></span>
  <span class="tbspace"></span>
  <span class="tskey ch">CH</span>
  <span class="tssep"></span>
  <span class="tskey kb"><svg class="k1"><path d="M1 9h15v8H1z" fill="#d4d0c8" stroke="#999"/><path d="M3 11h11M3 13h11M5 15h8" stroke="#aaa"/><path d="M9 9c0-5 5-2 6-6" fill="none" stroke="#bbb"/></svg></span>
  <span class="tssep"></span>
  <span class="tskey hp"><svg class="k2"><circle cx="10" cy="10" r="8" fill="#1c2fa0" stroke="#889"/><text x="10" y="15" class="hq">?</text></svg></span>
  <span class="tssep"></span>
  <span class="tskey rst"><svg class="k3"><path d="M3 4h8v4M6 2h6v4H9M2 5h7v5H2zM2 6h7" fill="none" stroke="#000"/><path d="M3 15h8l-4 3z" fill="#000"/></svg></span>
  <div class="tray">
    <span class="tc chev"><svg class="k3"><path d="M3 7l3-3 3 3M3 11l3-3 3 3" fill="none" stroke="#000" stroke-width="1.500"/></svg></span>
    <span class="tc"><svg class="k2"><circle cx="10" cy="10" r="8" fill="#e8d820" stroke="#486018"/><path d="M2 10a8 8 0 0 0 16 0z" fill="#2a9a3a"/><path d="M10 5v10M5 10h10" stroke="#000" stroke-width="2.500"/></svg></span>
    <span class="tc"><svg class="k2"><rect x="2" y="2" width="16" height="16" rx="3" fill="#a8d8d8"/><circle cx="10" cy="10" r="6" fill="#fff"/><circle cx="10" cy="10" r="3.500" fill="#0a6a8a"/></svg></span>
    <span class="tc"><svg class="k2"><rect x="3" y="2" width="7" height="6" fill="#666"/><rect x="2" y="8" width="9" height="10" fill="#888" stroke="#555"/><circle cx="14" cy="14" r="5" fill="#1a9a3a"/><path d="M11 14l2 2 4-5" stroke="#fff" fill="none"/></svg></span>
    <span class="tc"><svg class="k2"><rect x="2" y="3" width="11" height="14" fill="#fff" stroke="#222"/><path d="M9 8h7v6H9zM16 10h3M16 12h3M9 17h3" stroke="#222" fill="#fff"/></svg></span>
    <span class="tc"><svg class="k2"><path d="M2 17h3v2H2zM6 13h3v6H6zM10 9h3v10h-3zM14 5h3v14h-3z" fill="#fff" stroke="#888"/></svg></span>
    <span class="tc"><svg class="k2"><path d="M3 7h4l5-4v14l-5-4H3z" fill="#ddd" stroke="#999"/></svg></span>
    <div class="clock"><span class="time">22:56</span><span class="date">2011/4/28</span></div>
    <span class="tc mon"><svg class="k2"><rect x="1" y="3" width="18" height="13" fill="#3a78b8" stroke="#234"/><path d="M1 13h18v3H1z" fill="#7ab0d8"/><path d="M5 18h10" stroke="#555" stroke-width="2"/></svg></span>
  </div>
</div>

<div class="dlg">
  <div class="dtitle"><span>图斑生成参数设置</span><span class="dclose"><svg class="dx"><path d="M3 2l6 7M4 2l6 7M9 2L3 9M10 2L4 9" stroke="#000"/></svg></span></div>
  <div class="dtop">
    <fieldset class="grp">
      <legend>操作类型</legend>
      <div class="radios">
        <label class="rad"><span class="rdot"></span><span class="flab">土地详查</span></label>
        <label class="rad"><span class="rdot chk"></span><span class="flab">勘测定界</span></label>
      </div>
    </fieldset>
    <div class="maxlen">
      <span class="mlabel flab">图斑最长边长:</span>
      <input class="fld flong" value="150" aria-label="图斑最长边长">
      <span class="unit flab">米</span>
    </div>
  </div>
  <div class="dcols">
    <div class="dleft">
      <div class="frow"><span class="flab">用地界起始点号:</span><input class="fld" value="1" aria-label="用地界起始点号"></div>
      <div class="frow"><span class="flab">地类界起始点号:</span><input class="fld" value="1" aria-label="地类界起始点号"></div>
      <div class="frow"><span class="flab">国有土地界起始点号:</span><input class="fld" value="1" aria-label="国有土地界起始点号"></div>
      <div class="frow"><span class="flab">基本农田界起始点号:</span><input class="fld" value="1" aria-label="基本农田界起始点号"></div>
      <div class="frow"><span class="flab">省界起始点号:</span><input class="fld" value="1" aria-label="省界起始点号"></div>
    </div>
    <div class="dright">
      <div class="frow"><span class="flab">市界起始点号:</span><input class="fld" value="1" aria-label="市界起始点号"></div>
      <div class="frow"><span class="flab">县界起始点号:</span><input class="fld" value="1" aria-label="县界起始点号"></div>
      <div class="frow"><span class="flab">乡界起始点号:</span><input class="fld" value="1" aria-label="乡界起始点号"></div>
      <div class="frow tight"><span class="flab">村界起始点号:</span><input class="fld" value="1" aria-label="村界起始点号"></div>
      <div class="frow"><span class="flab">组界起始点号:</span><input class="fld" value="1" aria-label="组界起始点号"></div>
    </div>
  </div>
  <div class="dbtns">
    <button class="dbtn def"><span class="focus">确　定</span></button>
    <button class="dbtn"><span class="b2">退　出</span></button>
  </div>
</div>

<div class="wmark">
  <svg class="globe" viewBox="0 0 60 66"><defs><radialGradient id="gl" cx="35%" cy="30%" r="75%"><stop offset="0" stop-color="#dff0fb"/><stop offset=".55" stop-color="#4a96d8"/><stop offset="1" stop-color="#0c4a9a"/></radialGradient></defs><circle cx="24" cy="23" r="23" fill="url(#gl)"/><path d="M8 24c5-6 14-4 17 0 2 6-3 10-4 15-6-1-7-8-10-10-2-1-4-3-3-5zM26 6l12 3-2 6-10-2z" fill="#f3f7fa"/><path d="M28 46c-3-13 5-24 22-26-1 13-8 24-22 26z" fill="#8abb30" stroke="#5d8f18"/><path d="M28 48C24 39 17 33 10 36c3 8 10 13 18 12z" fill="#7aa828" stroke="#5d8f18"/></svg>
  <span class="wm1">地信网</span>
  <span class="wm2">论坛</span>
  <span class="wm3">bbs.3s001.com</span>
</div>

</div>
</body>
</html>
```
FILE: styles.css
```css
*{box-sizing:border-box}
html,body{margin:0;padding:0;background:#d4d0c8}
body{font-family:"Noto Sans CJK SC","Liberation Sans",sans-serif;font-size:12px;color:#000;overflow:hidden}
svg{display:block}
.app{position:relative;width:1280px;height:800px;display:flex;flex-direction:column;overflow:hidden;background:#d4d0c8}

.titlebar{height:18px;display:flex;align-items:center;background:linear-gradient(90deg,#8a8a8a,#b8b8b8);padding-left:2px}
.appicon{width:16px;height:16px;flex:none}
.cred{font:bold 15px "Liberation Serif",serif;fill:#c00000}
.c9{font:bold 7px "Liberation Sans",sans-serif;fill:#000}
.title{margin-left:2px;color:#d8d8d8;line-height:16px;height:17px;font-size:12px;font-weight:bold}
.mono{font:bold 12px "Liberation Mono",monospace;letter-spacing:-.2px}
.caps{margin-left:auto;display:flex;padding-right:2px}
.caps2{align-self:flex-start;margin-top:3px}
.cap{width:16px;height:14px;background:#d4d0c8;border:1px solid;border-color:#fff #404040 #404040 #fff;display:block}
.capgap{margin-left:2px}
.capi{width:14px;height:12px}

.menubar{height:19px;display:flex;background:#d4d0c8;padding-left:3px}
.menuicon{width:17px;height:17px;flex:none;margin-top:1px}
.menus{display:flex;gap:0;margin-left:-1px}
.mi{padding:0 6px;line-height:18px;color:#7b7b7b;white-space:nowrap;text-shadow:1px 1px 0 #e8e6e1;display:block}
.mi i{font:normal 10px "Liberation Mono",monospace}

.toolband{height:29px;padding:1px 0 0 4px}
.toolbar{width:869px;height:27px;display:flex;align-items:center;background:#d4d0c8;border:1px solid;border-color:#fff #808080 #808080 #fff}
.tgrip{width:7px;height:21px;margin:0 0 0 1px;flex:none;border-left:2px solid #fff;border-right:2px solid #8a8a8a;background:#d4d0c8}
.ti{width:23px;height:24px;flex:none;display:flex;align-items:center;justify-content:center}
.tv{width:13px;height:24px;flex:none;display:flex;align-items:center;justify-content:center}
.tri-s{width:0;height:0;border:3px solid transparent;border-top:4px solid #bbb;border-bottom:0}
.tsep{width:6px;height:22px;flex:none;position:relative;display:flex;justify-content:center}
.tsep::before{content:"";width:2px;height:22px;border-left:1px solid #808080;border-right:1px solid #fff}
.combo{width:299px;height:20px;flex:none;display:flex;align-items:center;background:#d4d0c8;border:2px solid;border-color:#6a6a6a #fff #fff #6a6a6a;padding-left:2px;position:relative}
.lyr{width:16px;height:20px;flex:none}
.lk{width:18px;margin-left:1px}
.colorbox{width:10px;height:10px;border:1px solid #000;background:#fff;margin-left:0;flex:none}
.lname{font:12px "Liberation Mono",monospace;color:#666;margin-left:4px}
.dropbtn{margin-left:auto;width:16px;height:16px;background:#d4d0c8;border:1px solid;border-color:#fff #404040 #404040 #fff;display:flex;align-items:center;justify-content:center}
.tri-d{width:0;height:0;border:4px solid transparent;border-top:5px solid #808080;border-bottom:0}
.i{width:22px;height:22px;fill:none;stroke:#000;stroke-width:1;flex:none}
.n{fill:#0b63b5;stroke:none}

.mainrow{height:630px;display:flex}
.docks{width:79px;height:630px;display:flex;gap:1px;flex:none;overflow:hidden;border-top:2px solid #808080}
.dcol{display:flex;flex-direction:column;flex:none}
.dcol1{width:25px}.dcol2{width:25px}.dcol3{width:25px}
.dsec{display:flex;flex-direction:column;align-items:center;background:#d4d0c8;border-right:1px solid #808080;border-bottom:1px solid #808080;border-left:1px solid #fff;padding-top:1px;overflow:hidden}
.s1a{height:388px}
.s1b{height:104px;margin-top:9px;border-top:1px solid #fff;padding-top:1px}
.s2{height:416px}
.s3a{height:366px}
.s3b{height:260px;margin-top:2px;padding-top:1px;border-top:1px solid #fff;border-bottom:0}
.grip{width:20px;height:6px;margin-bottom:2px;background:linear-gradient(#fff 1px,#999 1px,#999 2px,#d4d0c8 2px,#d4d0c8 4px,#fff 4px,#fff 5px,#999 5px);flex:none}
.g2{margin-bottom:3px}
.ic{width:22px;height:22px;flex:none;display:flex;align-items:center;justify-content:center}
.dsep{width:20px;height:5px;flex:none;display:flex;position:relative}
.dsep::before{content:"";width:20px;height:2px;margin-top:2px;border-top:1px solid #808080;border-bottom:1px solid #fff}
.ds3{height:6px}
.biga{font:20px "Liberation Sans",sans-serif;line-height:22px}
.redz{font-size:18px;line-height:22px;color:#f00000}
.red9{font:bold 13px "Liberation Sans",sans-serif;color:#f00000;line-height:22px}
.gbg{background:#c9c6c0}
.gh{font:bold 9px "Liberation Sans",sans-serif;fill:#0a6a20;stroke:none}
.ta{font:bold 10px "Liberation Sans",sans-serif;fill:#123;stroke:none}
.tq{font:bold 15px "Liberation Sans",sans-serif;fill:#fff;stroke:none;text-anchor:middle}

.center{width:1101px;display:flex;flex-direction:column;flex:none;padding-top:2px}
.cvrow{height:610px;display:flex}
.canvas{width:1084px;background:#000}
.vscroll{width:17px;display:flex;flex-direction:column}
.sbtn{width:16px;height:16px;flex:none;background:#d4d0c8;border:1px solid;border-color:#d4d0c8 #404040 #404040 #fff;box-shadow:inset -1px -1px 0 #808080;display:flex;align-items:center;justify-content:center}
.vtrack{flex:1;padding-top:280px;background:repeating-conic-gradient(#fff 0 25%,#d4d0c8 0 50%) 0 0/2px 2px}
.vthumb{display:block;width:16px;height:16px;background:#d4d0c8;border:1px solid;border-color:#d4d0c8 #404040 #404040 #fff;box-shadow:inset -1px -1px 0 #808080}
.tri-u{width:0;height:0;border:4px solid transparent;border-bottom:4px solid #000;border-top:0}
.tri-d2{width:0;height:0;border:4px solid transparent;border-top:4px solid #000;border-bottom:0}
.tri-l{width:0;height:0;border:3px solid transparent;border-right:3px solid #000;border-left:0}
.tri-r{width:0;height:0;border:3px solid transparent;border-left:3px solid #000;border-right:0}
.hrow{height:16px;display:flex;padding-left:1px}
.navbtns{display:flex;flex:none}
.nb{width:18px;height:15px;background:#d4d0c8;border:1px solid;border-color:#fff #808080 #808080 #fff}
.ni{width:16px;height:13px}
.tabs{width:94px;height:16px;margin-left:5px;flex:none;overflow:visible}
.tabt{font:12px "Noto Sans CJK SC",sans-serif;fill:#fff}
.tabl{font:10px "Liberation Mono",monospace;fill:#000}
.hspace{flex:1}
.hgrip{width:6px;height:16px;background:#d4d0c8;border:1px solid;border-color:#fff #808080 #808080 #808080;flex:none}
.hbtn{width:15px}
.htrack{width:333px;flex:none;padding-left:159px;background:repeating-conic-gradient(#fff 0 25%,#d4d0c8 0 50%) 0 0/2px 2px}
.hthumb{display:block;width:15px;height:16px;background:#d4d0c8;border:1px solid;border-color:#d4d0c8 #404040 #404040 #fff}
.hrow .hbtn:last-child{margin-right:17px}

.band{width:7px;flex:none;margin-top:2px;background:#d4d0c8;border-left:2px solid #fff;border-right:1px solid #303030}
.rpanel{flex:1;display:flex;flex-direction:column;margin-top:2px;border-bottom:1px solid #808080;height:626px}
.rhead{height:14px;flex:none;display:flex;align-items:flex-start;padding:2px 4px 0 6px}
.rgrip{flex:1;height:7px;margin-top:3px;background:linear-gradient(#fff 1px,#999 1px,#999 2px,#d4d0c8 2px,#d4d0c8 4px,#fff 4px,#fff 5px,#999 5px,#999 6px,#d4d0c8 6px)}
.rclose{width:12px;height:11px;margin-left:4px;background:#d4d0c8;border:1px solid;border-color:#fff #404040 #404040 #fff}
.rx{width:10px;height:9px}
.rbody{display:flex;flex:1;min-height:0}
.ricons{width:20px;flex:none;padding:20px 0 0 1px;display:flex;flex-direction:column}
.ric{width:19px;height:22px;flex:none;display:flex;align-items:center;justify-content:center}
.j{width:19px;height:19px}
.gr{fill:none;stroke:#a8a8a8;stroke-width:1.500}
.blu{fill:none;stroke:#2a7ad0;stroke-width:1.200}
.ri{font:bold 13px "Liberation Serif",serif;fill:#fff;text-anchor:middle}
.rbtns{width:70px;display:flex;flex-direction:column;flex:none;padding-top:1px}
.rb{display:block;height:20px;margin-bottom:1px;flex:none;text-align:center;line-height:17px;background:#d4d0c8;border:1px solid;border-color:#fff #404040 #404040 #fff;font-size:12px;white-space:nowrap}
.sel{background:#fff;color:#000090;border:2px solid #000090;line-height:15px}
.r2{margin-bottom:0}
.rs{height:21px;margin:0;line-height:17px}
.rlist{height:360px;flex:none;background:#3a6ea5;display:flex;flex-direction:column;padding-top:4px}
.rli{display:block;height:26px;line-height:24px;text-align:center;color:#fff;font-size:12px}

.cmd{height:37px;display:flex;align-items:flex-start;border-top:1px solid #fff;position:relative;padding:9px 0 0 6px}
.cmd::before{content:"";position:absolute;left:0;right:0;top:2px;height:4px;border-top:1px solid #404040;border-bottom:1px solid #000}
.cgrip{width:8px;height:21px;margin-top:2px;border-left:2px solid #fff;border-right:2px solid #808080;background:#d4d0c8;flex:none;box-shadow:0 0 0 1px #bbb inset}
.cinput{width:984px;height:26px;margin-left:3px;background:#fff;border:1px solid;border-color:#000 #d4d0c8 #d4d0c8 #404040;outline:0;padding:0}
.status{height:24px;display:flex;align-items:center;border-top:1px solid #808080;border-bottom:1px solid #fff;position:relative;padding-left:7px;box-shadow:inset 0 1px 0 #fff}
.slabel{flex:none;white-space:nowrap}
.sl1{width:36px}
.sl2{width:42px}
.coord{width:250px;height:18px;flex:none;border:1px solid;border-color:#808080 #fff #fff #808080;background:#cfcbc3;padding-left:1px;font:11.500px/16px "Liberation Mono",monospace;color:#222;letter-spacing:-.9px;white-space:pre}
.sbtns{display:flex;gap:4px;margin-left:4px}
.sb{height:18px;flex:none;text-align:center;line-height:15px;background:#d4d0c8;border:1px solid;border-color:#fff #808080 #808080 #fff;white-space:nowrap;overflow:hidden;font-size:12px}
.w28{width:28px}.w52{width:52px}.w22{width:22px}
.dyn{font:bold 10px/16px "Liberation Mono",monospace;letter-spacing:-.3px}
.on{background:#e9e7e2;border-color:#404040 #fff #fff #404040}
.slock{width:44px;height:20px;margin-left:555px;border:1px solid;border-color:#808080 #fff #fff #808080;flex:none}
.lockg{width:42px;height:18px}
.sdrop{width:0;height:0;margin-left:7px;border:4px solid transparent;border-top:4px solid #000;border-bottom:0}

.taskbar{height:43px;display:flex;align-items:flex-start;padding:3px 0 0 2px}
.tb{height:38px;flex:none;display:flex;align-items:center;justify-content:center;background:#d4d0c8;border:1px solid;border-color:#fff #404040 #404040 #fff;box-shadow:inset -1px -1px 0 #808080;font-size:12px}
.start{width:47px;gap:2px}
.stxt{line-height:14px;padding-bottom:3px}
.flag{width:15px;height:17px;flex:none}
.ie{width:44px;margin-left:9px}
.tbgrip{width:3px;height:38px;margin:0 2px 0 0;border-right:1px solid #808080;border-left:1px solid #fff;flex:none;margin-left:1px}
.c9btn{width:47px;background:#fff;border-color:#404040 #fff #fff #404040;box-shadow:none;margin-left:1px}
.pal{width:47px;margin-left:3px}
.big{width:36px;height:36px;overflow:visible}
.iet{font:bold 32px "Liberation Sans",sans-serif;fill:#1fa030;text-anchor:middle}
.c9a{font:bold 30px "Liberation Serif",serif;fill:#a80818}
.c9b{font:bold 11px "Liberation Sans",sans-serif;fill:#222}
.tbspace{flex:1}
.tskey{height:36px;flex:none;display:flex;align-items:center;justify-content:center}
.ch{width:24px;font:12px "Liberation Mono",monospace}
.kb{width:27px}.hp{width:27px}.rst{width:17px}
.tssep{width:2px;height:30px;margin-top:3px;flex:none;border-left:1px solid #808080;border-right:1px solid #fff}
.k1{width:17px;height:18px}
.k2{width:20px;height:20px}
.k3{width:12px;height:20px}
.hq{font:bold 13px "Liberation Sans",sans-serif;fill:#fff;text-anchor:middle}
.tray{width:248px;height:37px;flex:none;display:flex;align-items:center;border:1px solid;border-color:#808080 #fff #fff #808080;padding-left:1px}
.tc{width:24px;height:22px;flex:none;display:flex;align-items:center;justify-content:center}
.chev{width:18px}
.clock{flex:1;display:flex;flex-direction:column;align-items:center;font:12px/16px "Liberation Sans",sans-serif;padding:0}
.time{letter-spacing:1px}
.mon{width:20px;margin-right:0}

.dlg{position:absolute;left:415px;top:236px;width:449px;height:284px;background:#d4d0c8;border:1px solid;border-color:#d4d0c8 #000 #000 #d4d0c8;box-shadow:inset 1px 1px 0 #fff,inset -1px -1px 0 #808080;padding:2px}
.dtitle{height:18px;display:flex;align-items:center;justify-content:space-between;background:linear-gradient(90deg,#0a246a,#a6caf0);color:#fff;font-weight:bold;font-size:13px;line-height:16px;padding:0 1px 0 2px}
.dclose{width:16px;height:14px;background:#d4d0c8;border:1px solid;border-color:#fff #404040 #404040 #fff}
.dx{width:14px;height:12px}
.dtop{height:53px;margin:9px 0 0 12px;display:flex;align-items:flex-end}
.grp{width:203px;height:53px;margin:0;padding:0;border:1px solid #808080;box-shadow:1px 1px 0 #fff,inset 1px 1px 0 #fff;font-size:16px}
.grp legend{margin-left:5px;padding:0 3px;line-height:16px;font-size:16px;height:16px}
.radios{display:flex;gap:18px;padding:8px 0 0 10px}
.rad{display:flex;align-items:center;gap:6px;font-size:16px;line-height:18px;white-space:nowrap}
.rdot{width:12px;height:12px;border-radius:50%;background:#fff;border:1px solid;border-color:#808080 #fff #fff #808080;box-shadow:inset 1px 1px 0 #404040;flex:none;position:relative;display:flex;align-items:center;justify-content:center}
.chk::after{content:"";width:4px;height:4px;border-radius:50%;background:#000}
.maxlen{display:flex;align-items:center;margin:0 0 9px 11px;font-size:16px}
.mlabel{width:116px;white-space:nowrap}
.flab{padding-bottom:2px;white-space:nowrap}
.fld{width:58px;height:24px;flex:none;margin:0;background:#fff;border:2px solid;border-color:#555 #e8e6e1 #e8e6e1 #555;outline:0;padding:0 0 2px 1px;font:bold 14px "Liberation Sans",sans-serif;color:#000}
.flong{width:62px}
.unit{margin-left:6px}
.dcols{display:flex;margin:9px 0 0 14px}
.dleft,.dright{display:flex;flex-direction:column;gap:4px}
.dright{margin-left:34px}
.frow{display:flex;align-items:center;height:24px;font-size:16px}
.tight{margin-top:-2px}
.dleft .flab{width:154px}
.dright .flab{width:114px}
.dbtns{display:flex;align-items:flex-start;margin:14px 0 0 76px}
.dbtn{width:100px;height:28px;margin:0;background:#d4d0c8;font:16px "Noto Sans CJK SC",sans-serif;color:#000;border:1px solid;border-color:#fff #404040 #404040 #fff;box-shadow:inset -1px -1px 0 #808080;padding:0;display:flex;align-items:center;justify-content:center}
.b2{line-height:18px;padding-bottom:2px}
.def{margin-top:2px;margin-right:90px;border:1px solid #000;box-shadow:inset 1px 1px 0 #fff,inset -2px -2px 0 #808080;padding:3px}
.focus{display:block;width:100%;height:100%;border:1px dotted #000;line-height:16px;text-align:center}

.wmark{position:absolute;left:1150px;top:733px;width:130px;height:67px;pointer-events:none}
.globe{position:absolute;left:0;top:0;width:60px;height:66px}
.wm1{position:absolute;left:53px;top:0;font-size:21px;line-height:26px;font-weight:bold;color:#1565c0;white-space:nowrap;letter-spacing:1.500px}
.wm2{position:absolute;left:86px;top:26px;font:italic 19px/24px "Noto Sans CJK SC",sans-serif;color:#e00000;white-space:nowrap}
.wm3{position:absolute;left:0;top:44px;font:20px/23px "Liberation Serif",serif;color:#1a76d2;white-space:nowrap;letter-spacing:.4px}
```
